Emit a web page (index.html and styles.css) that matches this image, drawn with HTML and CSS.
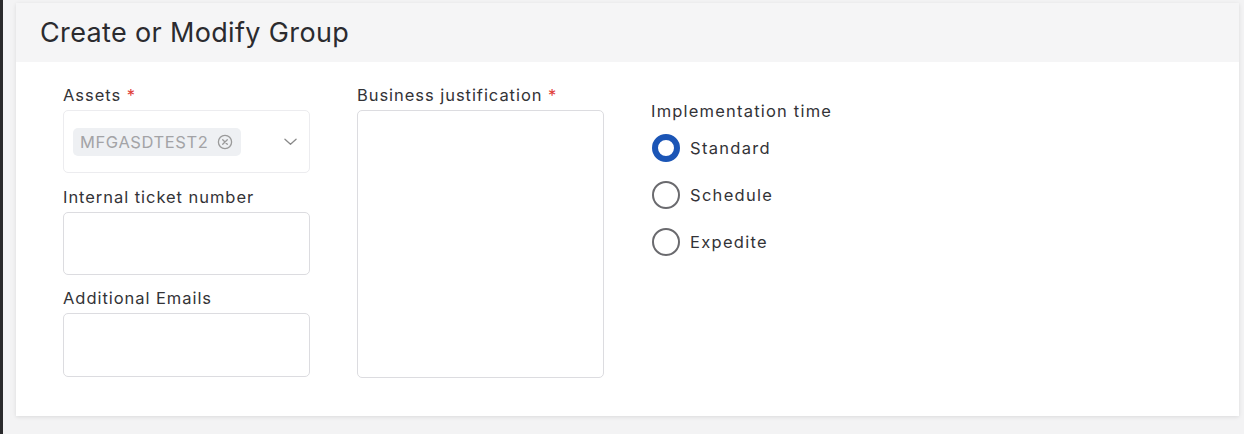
FILE: index.html
```html
<!DOCTYPE html>
<html>
<head>
<meta charset="utf-8">
<link rel="stylesheet" href="styles.css">
</head>
<body>
<div class="frame">
  <div class="edge"></div>
  <div class="page">
    <div class="card">
      <div class="card-head">
        <h1 class="title">Create or Modify Group</h1>
      </div>
      <div class="card-body">
        <div class="col">
          <div class="field">
            <label class="label">Assets <span class="req">*</span></label>
            <div class="select">
              <span class="chip">MFGASDTEST2
                <svg class="chip-x" viewBox="0 0 16 16" width="16" height="16"><circle cx="8" cy="8" r="6.6" fill="none" stroke="#9a9a9a" stroke-width="1.3"/><path d="M5.7 5.7L10.3 10.3M10.3 5.7L5.7 10.3" stroke="#9a9a9a" stroke-width="1.3" stroke-linecap="round"/></svg>
              </span>
              <svg class="chev" viewBox="0 0 14 8" width="13" height="8"><path d="M1 1l6 5.5L13 1" fill="none" stroke="#8a8a8a" stroke-width="1.4" stroke-linecap="round" stroke-linejoin="round"/></svg>
            </div>
          </div>
          <div class="field">
            <label class="label">Internal ticket number</label>
            <div class="input"></div>
          </div>
          <div class="field last">
            <label class="label">Additional Emails</label>
            <div class="input"></div>
          </div>
        </div>
        <div class="col">
          <div class="field">
            <label class="label">Business justification <span class="req">*</span></label>
            <div class="textarea"></div>
          </div>
        </div>
        <div class="col col-radio">
          <div class="label">Implementation time</div>
          <div class="radios">
            <div class="radio"><span class="dot on"></span><span class="rtext">Standard</span></div>
            <div class="radio"><span class="dot"></span><span class="rtext">Schedule</span></div>
            <div class="radio"><span class="dot"></span><span class="rtext">Expedite</span></div>
          </div>
        </div>
      </div>
    </div>
  </div>
</div>
</body>
</html>
```
FILE: styles.css
```css
* { box-sizing: border-box; }
html, body { margin: 0; padding: 0; }
body {
  width: 1244px;
  height: 434px;
  overflow: hidden;
  background: #f3f3f4;
  font-family: Inter, "Noto Sans", sans-serif;
  color: #2f2f33;
}
.frame { display: flex; height: 434px; }
.edge { width: 3px; background: #2a2a2c; flex: none; }
.page { flex: 1; padding: 3px 5px 0 13px; }
.card {
  background: #ffffff;
  box-shadow: 0 1px 4px rgba(0,0,0,0.10);
  height: 413px;
  display: flex;
  flex-direction: column;
}
.card-head {
  background: #f5f5f6;
  height: 59px;
  padding: 0 24px;
  display: flex;
  align-items: center;
}
.title {
  margin: 0;
  font-weight: 400;
  font-size: 27px;
  letter-spacing: 0.35px;
  color: #2b2b2f;
}
.card-body {
  display: grid;
  grid-template-columns: 247px 247px 247px;
  column-gap: 47px;
  padding: 24px 47px 0 47px;
}
.col { display: flex; flex-direction: column; gap: 15px; }
.field { display: flex; flex-direction: column; gap: 5px; }
.label { font-size: 16.5px; line-height: 19px; letter-spacing: 0.95px; color: #333337; }
.req { color: #e0403a; }
.select, .input, .textarea {
  border: 1px solid #dcdce0;
  border-radius: 5px;
  background: #fff;
}
.select {
  height: 63px;
  display: flex;
  align-items: center;
  padding: 0 11px 0 9px;
  justify-content: space-between;
  border-color: #ececef;
}
.chip {
  display: inline-flex;
  align-items: center;
  gap: 9px;
  background: #eef0f3;
  border-radius: 5px;
  height: 28px;
  padding: 0 8px 0 7px;
  font-size: 16.5px;
  letter-spacing: 0.6px;
  color: #a3a3a6;
}
.chip-x { display: block; }
.chev { display: block; margin-right: 1px; }
.input { height: 63px; }
.field.last { margin-top: -1px; }
.field.last .input { height: 64px; }
.textarea { height: 268px; }
.col-radio { padding-top: 16px; gap: 13px; }
.col-radio .label { letter-spacing: 1.2px; }
.radios { display: flex; flex-direction: column; gap: 19px; }
.radio { display: flex; align-items: center; gap: 10px; height: 28px; }
.dot {
  width: 28px;
  height: 28px;
  border-radius: 50%;
  border: 2px solid #6a6a6e;
  flex: none;
  margin-left: 1px;
}
.dot.on { border: 6px solid #1b55b6; }
.rtext { font-size: 16.5px; letter-spacing: 1.3px; color: #333337; }
```
